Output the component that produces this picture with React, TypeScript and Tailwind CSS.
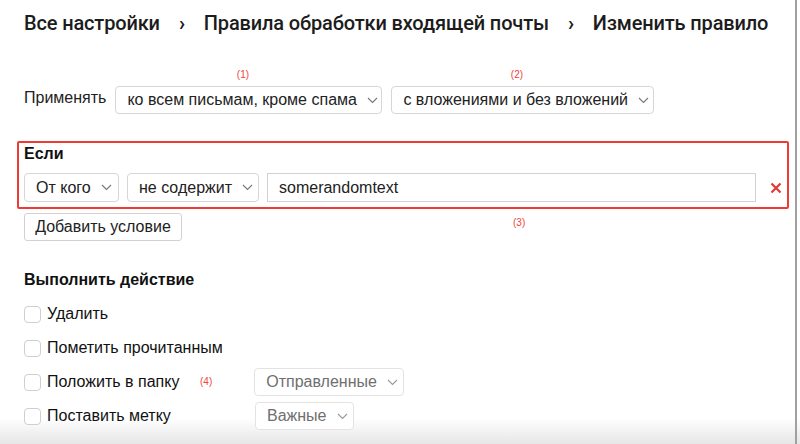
import { ReactNode } from 'react'

function Chevron({ muted }: { muted?: boolean }) {
  return (
    <svg width="11" height="7" viewBox="0 0 11 7" fill="none" className="shrink-0">
      <path d="M1 1l4.5 4.5L10 1" stroke={muted ? '#9a9a9a' : '#777'} strokeWidth="1.1" />
    </svg>
  )
}

function Select({ children, muted, className = '' }: { children: ReactNode; muted?: boolean; className?: string }) {
  return (
    <div
      className={`flex h-[28px] shrink-0 items-center justify-between gap-[10px] rounded-[4px] border bg-white pl-[11px] pr-[9px] text-[16px] ${
        muted ? 'border-[#e3e3e3] text-[#6f6f6f]' : 'border-[#d6d6d6] text-[#222]'
      } ${className}`}
    >
      <span>{children}</span>
      <Chevron muted={muted} />
    </div>
  )
}

function Note({ n, className = '' }: { n: number; className?: string }) {
  return <span className={`block text-[10px] leading-[12px] text-[#f0443a] ${className}`}>({n})</span>
}

function Check({ label, children }: { label: string; children?: ReactNode }) {
  return (
    <div className="flex h-[28px] items-center">
      <div className="flex w-[231px] shrink-0 items-center">
        <span className="h-[17px] w-[17px] rounded-[4px] border border-[#cfcfcf] bg-white" />
        <span className="ml-[6px] text-[16px] text-[#111]">{label}</span>
      </div>
      {children}
    </div>
  )
}

export default function App() {
  return (
    <div
      className="h-[444px] w-[800px] overflow-hidden whitespace-nowrap bg-[linear-gradient(to_bottom,#fff_0,#fff_418px,#e6e6e6_444px)]"
      style={{ fontFamily: '"Liberation Sans", Arial, sans-serif' }}
    >
      <div className="h-full w-[797px] border-r-2 border-[#a0a0a0] pl-[24px]">
        <nav
          className="flex items-center pt-[9px] text-[20px] font-medium leading-[28px] tracking-[-0.15px] text-[#1c1c1c]"
          style={{ fontFamily: 'Roboto, "Noto Sans", sans-serif' }}
        >
          <span>Все настройки</span>
          <span className="mx-[19px] text-[20px] font-bold">›</span>
          <span>Правила обработки входящей почты</span>
          <span className="mx-[19px] text-[20px] font-bold">›</span>
          <span>Изменить правило</span>
        </nav>

        <div className="mt-[32px] flex items-end">
          <span className="mb-[4px] mr-[9px] text-[16px] text-[#222]">Применять</span>
          <div className="flex flex-col items-center gap-[5px]">
            <Note n={1} className="-ml-[12px]" />
            <Select className="w-[267px]">ко всем письмам, кроме спама</Select>
          </div>
          <div className="ml-[9px] flex flex-col items-center gap-[5px]">
            <Note n={2} className="-ml-[12px]" />
            <Select className="w-[263px]">с вложениями и без вложений</Select>
          </div>
        </div>

        <div className="-ml-[7px] mt-[27px] w-[772px] rounded-[2px] border-2 border-[#ef3b36] pb-[5px] pl-[5px] pt-[1px]">
          <div className="text-[16px] font-bold leading-[20px] text-[#111]">Если</div>
          <div className="mt-[9px] flex items-center">
            <Select className="h-[29px] w-[95px]">От кого</Select>
            <Select className="ml-[8px] h-[29px] w-[132px]">не содержит</Select>
            <div className="ml-[8px] flex h-[29px] w-[489px] shrink-0 items-center border border-[#d2d2d2] pl-[11px] text-[16px] text-[#222]">
              somerandomtext
            </div>
            <svg width="12" height="12" viewBox="0 0 12 12" className="ml-[14px] shrink-0">
              <path d="M1.5 1.5l9 9M10.5 1.5l-9 9" stroke="#e53935" strokeWidth="2.2" />
            </svg>
          </div>
        </div>

        <div className="mt-[4px] flex items-start">
          <div className="flex h-[28px] w-[158px] items-center justify-center rounded-[3px] border border-[#d2d2d2] text-[16px] text-[#222]">
            Добавить условие
          </div>
          <Note n={3} className="ml-[331px] mt-[4px]" />
        </div>

        <div className="mt-[29px] text-[16px] font-bold leading-[20px] text-[#111]">Выполнить действие</div>

        <div className="mt-[10px] flex flex-col gap-[6px]">
          <Check label="Удалить" />
          <Check label="Пометить прочитанным" />
          <Check label="Положить в папку">
            <Note n={4} className="-ml-[55px] mr-[42px]" />
            <Select muted className="w-[150px]">
              Отправленные
            </Select>
          </Check>
          <Check label="Поставить метку">
            <Select muted className="w-[99px]">
              Важные
            </Select>
          </Check>
        </div>
      </div>
    </div>
  )
}
